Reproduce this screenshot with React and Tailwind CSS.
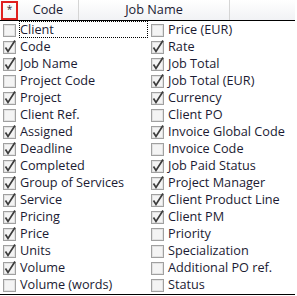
const left = [
  ['Client', false],
  ['Code', true],
  ['Job Name', true],
  ['Project Code', false],
  ['Project', true],
  ['Client Ref.', false],
  ['Assigned', true],
  ['Deadline', true],
  ['Completed', true],
  ['Group of Services', true],
  ['Service', true],
  ['Pricing', true],
  ['Price', true],
  ['Units', true],
  ['Volume', true],
  ['Volume (words)', false],
]

const right = [
  ['Price (EUR)', false],
  ['Rate', true],
  ['Job Total', true],
  ['Job Total (EUR)', true],
  ['Currency', true],
  ['Client PO', false],
  ['Invoice Global Code', true],
  ['Invoice Code', false],
  ['Job Paid Status', true],
  ['Project Manager', true],
  ['Client Product Line', true],
  ['Client PM', true],
  ['Priority', false],
  ['Specialization', false],
  ['Additional PO ref.', false],
  ['Status', false],
]

function Box({ checked }) {
  return (
    <svg width="14" height="14" viewBox="0 0 14 14" className="shrink-0">
      <rect x="0.5" y="1.5" width="12" height="12" fill="#f4f4f4" stroke="#a0a0a0" />
      <rect x="1.5" y="2.5" width="10" height="10" fill="none" stroke="#e2e2e2" />
      {checked && (
        <path d="M2.5 7.5 L5 11.5 L12 0.5" fill="none" stroke="#3c3c3c" strokeWidth="1.7" />
      )}
    </svg>
  )
}

function Item({ label, checked, focused }) {
  return (
    <div className="h-[17px] flex items-center">
      <div className="w-[20px] pl-[3px] flex items-center">
        <Box checked={checked} />
      </div>
      {focused ? (
        <span className="flex-1 h-[17px] leading-[15px] -ml-px border border-dotted border-black text-[12.7px] text-[#1b1b33] whitespace-nowrap">
          {label}
        </span>
      ) : (
        <span className="h-[17px] leading-[17px] text-[12.7px] text-[#1b1b33] whitespace-nowrap">
          {label}
        </span>
      )}
    </div>
  )
}

export default function App() {
  return (
    <div className="w-[297px] h-[296px] bg-white font-['Open_Sans',sans-serif] overflow-hidden">
      {/* Header */}
      <div className="h-[21px] flex bg-gradient-to-b from-white to-[#f1f2f5] border-b border-black w-[295px]">
        <div className="w-[18px] flex items-start pt-px pl-px">
          <div className="w-[17px] h-[19px] border-2 border-[#e02020] flex items-start justify-center text-[10px] leading-[12px] text-[#333]">
            *
          </div>
        </div>
        <div className="w-[61px] border-r border-[#d5d5d5] flex items-center justify-center text-[12.7px] text-[#1b1b33]">
          Code
        </div>
        <div className="w-[151px] border-r border-[#d5d5d5] flex items-center justify-center text-[12.7px] text-[#1b1b33]">
          Job Name
        </div>
        <div className="flex-1" />
      </div>

      {/* List */}
      <div className="flex border-b border-black w-[295px] pb-px">
        <div className="w-[148px] flex flex-col">
          {left.map(([l, c], i) => (
            <Item key={l} label={l} checked={c} focused={i === 0} />
          ))}
        </div>
        <div className="flex-1 flex flex-col">
          {right.map(([l, c]) => (
            <Item key={l} label={l} checked={c} />
          ))}
        </div>
      </div>
    </div>
  )
}
